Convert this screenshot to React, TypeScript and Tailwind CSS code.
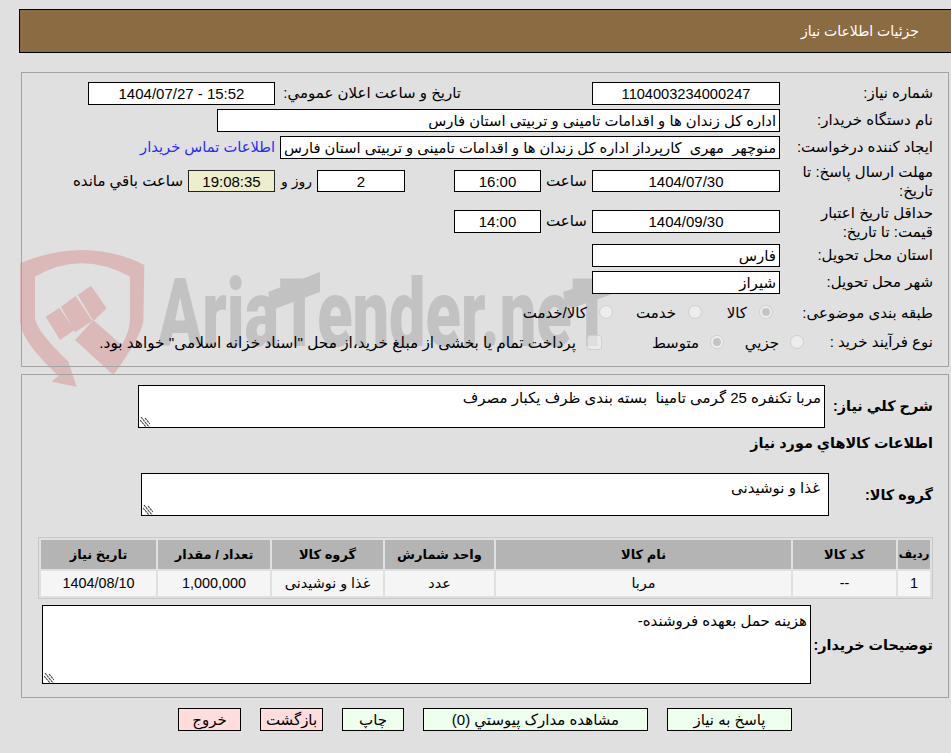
import React from "react";

const Field = ({ value, className = "", ltr = false }: { value: string; className?: string; ltr?: boolean }) => (
  <input
    readOnly
    dir={ltr ? "ltr" : "rtl"}
    value={value}
    className={`h-full border border-black bg-white px-[3px] text-black outline-none whitespace-pre ${className}`}
  />
);

const Radio = ({ checked = false }: { checked?: boolean }) => (
  <span className="flex h-[14px] w-[14px] shrink-0 items-center justify-center rounded-full border border-[#cfcfcf] bg-[#f0f0f0]/80">
    {checked && <span className="h-[8px] w-[8px] rounded-full bg-[#c4c4c4]" />}
  </span>
);

const TextBox = ({ value, className = "" }: { value: string; className?: string }) => (
  <div className="relative flex">
    <textarea readOnly value={value} className={`resize-none border border-black bg-white outline-none ${className}`} />
    <svg width="10" height="10" viewBox="0 0 10 10" className="absolute bottom-[1px] left-[2px]">
      <path d="M0 3 L6 10 M1 0 L9 10 M5 1 L10 7" stroke="#444" strokeWidth="1.1" strokeDasharray="2.5 .6" fill="none" />
    </svg>
  </div>
);

const Watermark = () => (
  <div className="pointer-events-none absolute left-0 top-[245px]">
    <svg width="170" height="150" viewBox="0 0 510 450" className="absolute left-[15px] top-0">
      <g fill="#dbb9b9">
        <path d="M15 55 Q110 15 200 15 Q300 15 388 60 L385 230 Q375 280 295 390 L180 285 L235 225 L320 300 Q345 260 345 220 L345 95 Q270 55 200 55 Q130 55 60 95 L60 220 Q65 260 165 355 L160 350 L185 425 L110 410 L130 392 Q20 290 15 230 Z" />
        <polygon points="188,150 228,122 275,190 235,228" />
        <polygon points="138,185 182,153 232,228 180,262" />
        <polygon points="92,215 133,188 178,255 135,285" />
      </g>
    </svg>
    <div
      dir="ltr"
      className="absolute left-[158px] top-[14px] origin-left scale-x-[.69] whitespace-nowrap font-['Roboto',sans-serif] text-[94px] font-black leading-[110px] text-[#c2c2c2]"
    >
      AriaTender.neT
    </div>
    {/* slanted bars of the two T letters in the logo */}
    <svg width="400" height="60" viewBox="0 0 400 60" className="absolute left-[260px] top-[25px]">
      <polygon points="8,22 60,2 60,22 12,40" fill="#c2c2c2" />
      <polygon points="303,22 358,3 358,22 307,40" fill="#c2c2c2" />
    </svg>
  </div>
);

export default function App() {
  return (
    <div
      dir="rtl"
      className="relative min-h-screen overflow-hidden bg-[#e0e0e0] font-['Liberation_Sans','DejaVu_Sans',sans-serif] text-[15px] text-black"
    >
      <Watermark />
      <div className="relative pb-[22px] pt-[9px]">
        {/* header */}
        <div className="ml-[19px] flex h-[44px] items-center border-y border-l border-black bg-[#8b6b42] pr-[32px] pt-[1px] text-[14px] text-white">
          جزئیات اطلاعات نیاز
        </div>

        {/* need info */}
        <div className="ml-[21px] mr-[2px] mt-[19px] border border-[#a3a3a3] pb-[13px] pr-[15px] pt-[9px]">
          <div className="flex h-[23px] items-center">
            <div className="w-[153px] shrink-0">شماره نیاز:</div>
            <Field value="1104003234000247" className="w-[188px] text-center text-[14.6px]" />
            <div className="w-[317px] shrink-0 pr-[131px]">تاریخ و ساعت اعلان عمومي:</div>
            <Field ltr value="1404/07/27 - 15:52" className="w-[187px] text-center" />
          </div>
          <div className="mt-[4px] flex h-[23px] items-center">
            <div className="w-[153px] shrink-0">نام دستگاه خریدار:</div>
            <Field value="اداره کل زندان ها و اقدامات تامینی و تربیتی استان فارس" className="w-[563px] text-[14.8px]" />
          </div>
          <div className="mt-[4px] flex h-[23px] items-center">
            <div className="w-[153px] shrink-0">ایجاد کننده درخواست:</div>
            <Field value="منوچهر  مهری  کارپرداز اداره کل زندان ها و اقدامات تامینی و تربیتی استان فارس" className="w-[500px] text-[14.7px]" />
            <a className="mr-[5px] text-[14.7px] text-[#2a2aff]">اطلاعات تماس خریدار</a>
          </div>
          <div className="mt-[11px] flex h-[22px] items-center">
            <div className="w-[153px] shrink-0 pl-[4px] leading-[19px]">مهلت ارسال پاسخ: تا تاریخ:</div>
            <Field value="1404/07/30" className="w-[188px] text-center" />
            <div className="w-[51px] shrink-0 text-center">ساعت</div>
            <Field value="16:00" className="w-[87px] text-center" />
            <div className="w-[49px] shrink-0" />
            <Field value="2" className="w-[88px] text-center" />
            <div className="w-[42px] shrink-0 pr-[5px] text-[14px]">روز و</div>
            <Field value="19:08:35" className="w-[87px] !border-[#222] !bg-[#eeeecc] text-center" />
            <div className="mr-[5px]">ساعت باقي مانده</div>
          </div>
          <div className="mt-[18px] flex h-[23px] items-center">
            <div className="w-[153px] shrink-0 pl-[4px] leading-[19px]">حداقل تاریخ اعتبار قیمت: تا تاریخ:</div>
            <Field value="1404/09/30" className="w-[188px] text-center" />
            <div className="w-[51px] shrink-0 text-center">ساعت</div>
            <Field value="14:00" className="w-[87px] text-center" />
          </div>
          <div className="mt-[11px] flex h-[23px] items-center">
            <div className="w-[153px] shrink-0">استان محل تحویل:</div>
            <Field value="فارس" className="w-[188px]" />
          </div>
          <div className="mt-[4px] flex h-[23px] items-center">
            <div className="w-[153px] shrink-0">شهر محل تحویل:</div>
            <Field value="شیراز" className="w-[188px]" />
          </div>
          <div className="mt-[7px] flex h-[22px] items-center">
            <div className="w-[153px] shrink-0 pt-[2px]">طبقه بندی موضوعی:</div>
            <div className="flex w-[78px] shrink-0 items-center gap-[12px] pr-[7px]">
              <Radio checked />
              <span className="pt-[3px]">کالا</span>
            </div>
            <div className="flex w-[89px] shrink-0 items-center gap-[12px]">
              <Radio />
              <span className="pt-[3px]">خدمت</span>
            </div>
            <div className="flex items-center gap-[12px]">
              <Radio />
              <span className="pt-[3px]">کالا/خدمت</span>
            </div>
          </div>
          <div className="mt-[8px] flex h-[22px] items-center">
            <div className="w-[129px] shrink-0">نوع فرآیند خرید :</div>
            <div className="flex w-[80px] shrink-0 items-center gap-[11px]">
              <Radio />
              <span className="pt-[3px]">جزیي</span>
            </div>
            <div className="flex w-[122px] shrink-0 items-center gap-[11px]">
              <Radio checked />
              <span className="pt-[3px]">متوسط</span>
            </div>
            <div className="flex items-center gap-[11px]">
              <span className="h-[15px] w-[15px] shrink-0 rounded-[3px] border border-[#cfcfcf] bg-[#f0f0f0]/60" />
              <span className="pt-[3px] text-[15.3px]">پرداخت تمام یا بخشی از مبلغ خرید،از محل "اسناد خزانه اسلامی" خواهد بود.</span>
            </div>
          </div>
        </div>

        {/* goods */}
        <div className="ml-[21px] mr-[2px] mt-[7px] border border-[#a3a3a3] pb-[13px] pr-[15px] pt-[10px]">
          <div className="flex items-center">
            <div className="w-[108px] shrink-0 text-[14.4px] font-bold">شرح كلي نياز:</div>
            <TextBox
              value="مربا تکنفره 25 گرمی تامینا  بسته بندی ظرف یکبار مصرف"
              className="h-[43px] w-[687px] px-[3px] pt-[1px]"
            />
          </div>
          <div className="mt-[6px] flex h-[20px] items-center text-[14.4px] font-bold">اطلاعات كالاهاي مورد نياز</div>
          <div className="mt-[19px] flex items-center">
            <div className="w-[104px] shrink-0 pt-[3px] text-[14.4px] font-bold">گروه کالا:</div>
            <TextBox value="غذا و نوشیدنی" className="h-[43px] w-[688px] px-[8px] pt-[3px]" />
          </div>
          <table className="mt-[21px] w-[895px] table-fixed border-separate border-spacing-[2px] border border-[#c8c8c8] text-center">
            <colgroup>
              <col className="w-[32px]" />
              <col className="w-[103px]" />
              <col className="w-[295px]" />
              <col className="w-[109px]" />
              <col className="w-[111px]" />
              <col className="w-[112px]" />
              <col className="w-[115px]" />
            </colgroup>
            <thead>
              <tr className="h-[29px] bg-[#b4b4b4]">
                <th className="p-0 text-[11.5px] font-bold">ردیف</th>
                {["کد کالا", "نام کالا", "واحد شمارش", "گروه کالا", "تعداد / مقدار", "تاریخ نیاز"].map((h) => (
                  <th key={h} className="p-0 text-[13px] font-bold">
                    {h}
                  </th>
                ))}
              </tr>
            </thead>
            <tbody>
              <tr className="h-[25px] bg-[#f5f5f5]">
                {["1", "--", "مربا", "عدد", "غذا و نوشیدنی", "1,000,000", "1404/08/10"].map((c) => (
                  <td key={c} className="p-0 text-[14.4px]">
                    {c}
                  </td>
                ))}
              </tr>
            </tbody>
          </table>
          <div className="mt-[6px] flex items-center">
            <div className="w-[122px] shrink-0 pt-[3px] text-[14.4px] font-bold">توضیحات خریدار:</div>
            <TextBox value="هزینه حمل بعهده فروشنده-" className="h-[79px] w-[769px] px-[3px] pt-[4px]" />
          </div>
        </div>

        {/* actions */}
        <div className="mt-[10px] flex h-[23px] gap-[19px] pr-[159px]">
          <button className="w-[125px] border border-black bg-[#eeffee]">پاسخ به نیاز</button>
          <button className="w-[225px] border border-black bg-[#eeffee]">مشاهده مدارک پیوستي (0)</button>
          <button className="w-[62px] border border-black bg-[#eeffee]">چاپ</button>
          <button className="w-[63px] border border-black bg-[#ffdddd]">بازگشت</button>
          <button className="w-[63px] border border-black bg-[#ffdddd]">خروج</button>
        </div>
      </div>
    </div>
  );
}
